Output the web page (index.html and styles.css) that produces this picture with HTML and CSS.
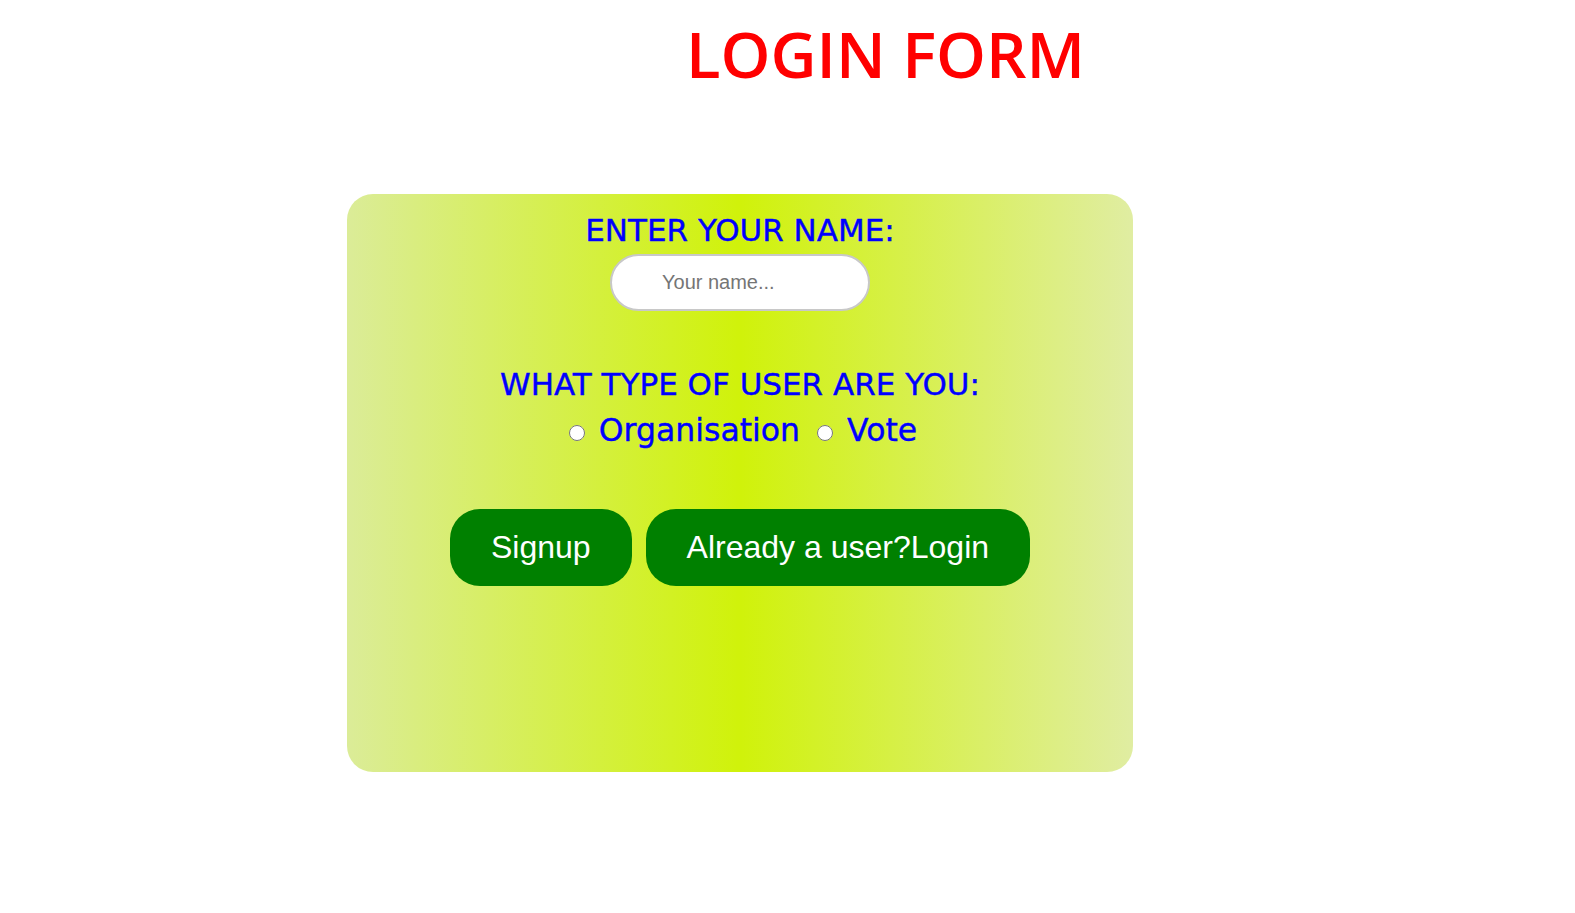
FILE: index.html
```html
<!DOCTYPE html>
<html>
<head>
<meta charset="utf-8">
<title>Login Form</title>
<link rel="stylesheet" href="styles.css">
</head>
<body>
<h1 class="title">LOGIN FORM</h1>
<div class="card">
  <label class="label" for="name">ENTER YOUR NAME:</label>
  <input class="name-input" id="name" type="text" placeholder="Your name...">
  <div class="label type-label">WHAT TYPE OF USER ARE YOU:</div>
  <div class="radios">
    <input type="radio" class="radio" name="type" id="org"><label class="radio-label" for="org">Organisation</label>
    <input type="radio" class="radio" name="type" id="vote"><label class="radio-label" for="vote">Vote</label>
  </div>
  <div class="buttons">
    <button class="btn">Signup</button>
    <button class="btn">Already a user?Login</button>
  </div>
</div>
</body>
</html>
```

FILE: styles.css
```css
html, body {
  margin: 0;
  padding: 0;
  background: #ffffff;
}

.title {
  margin: 0;
  padding: 16px 0 0 686px;
  height: 194px;
  box-sizing: border-box;
  font-family: "Open Sans", sans-serif;
  font-weight: 600;
  font-size: 63.5px;
  line-height: 76px;
  color: #ff0000;
}

.card {
  margin-left: 347px;
  width: 786px;
  height: 578px;
  box-sizing: border-box;
  border-radius: 26px;
  background: linear-gradient(to right, #dbec98 0%, #d0f20a 50%, #e0eda2 100%);
  display: flex;
  flex-direction: column;
  align-items: center;
  padding-top: 18px;
}

.label {
  font-family: "DejaVu Sans", sans-serif;
  font-size: 31px;
  line-height: 36px;
  color: #0000ff;
  -webkit-text-stroke: 0.4px #0000ff;
}

.name-input {
  margin-top: 6px;
  width: 260px;
  height: 57px;
  box-sizing: border-box;
  border: 2px solid #c8c8c8;
  border-radius: 29px;
  background: #ffffff;
  padding: 0 0 0 50px;
  font-family: "Liberation Sans", Arial, sans-serif;
  font-size: 20px;
  outline: none;
}

.name-input::placeholder {
  color: #757575;
}

.type-label {
  margin-top: 55px;
}

.radios {
  display: flex;
  align-items: center;
  margin-top: 8px;
  height: 40px;
  padding-left: 6px;
}

.radio {
  width: 16px;
  height: 16px;
  margin: 6px 14px 0 0;
}

.radio-label {
  font-family: "DejaVu Sans", sans-serif;
  font-size: 31.5px;
  line-height: 40px;
  color: #0000ff;
  -webkit-text-stroke: 0.4px #0000ff;
  margin-right: 17px;
}

.radio-label:last-child {
  margin-right: 0;
}

.buttons {
  display: flex;
  gap: 14px;
  margin-top: 59px;
}

.btn {
  font-family: "Liberation Sans", Arial, sans-serif;
  font-size: 32px;
  line-height: 37px;
  color: #ffffff;
  background: #008000;
  border: none;
  border-radius: 30px;
  padding: 20px 41px;
  cursor: pointer;
}
```
